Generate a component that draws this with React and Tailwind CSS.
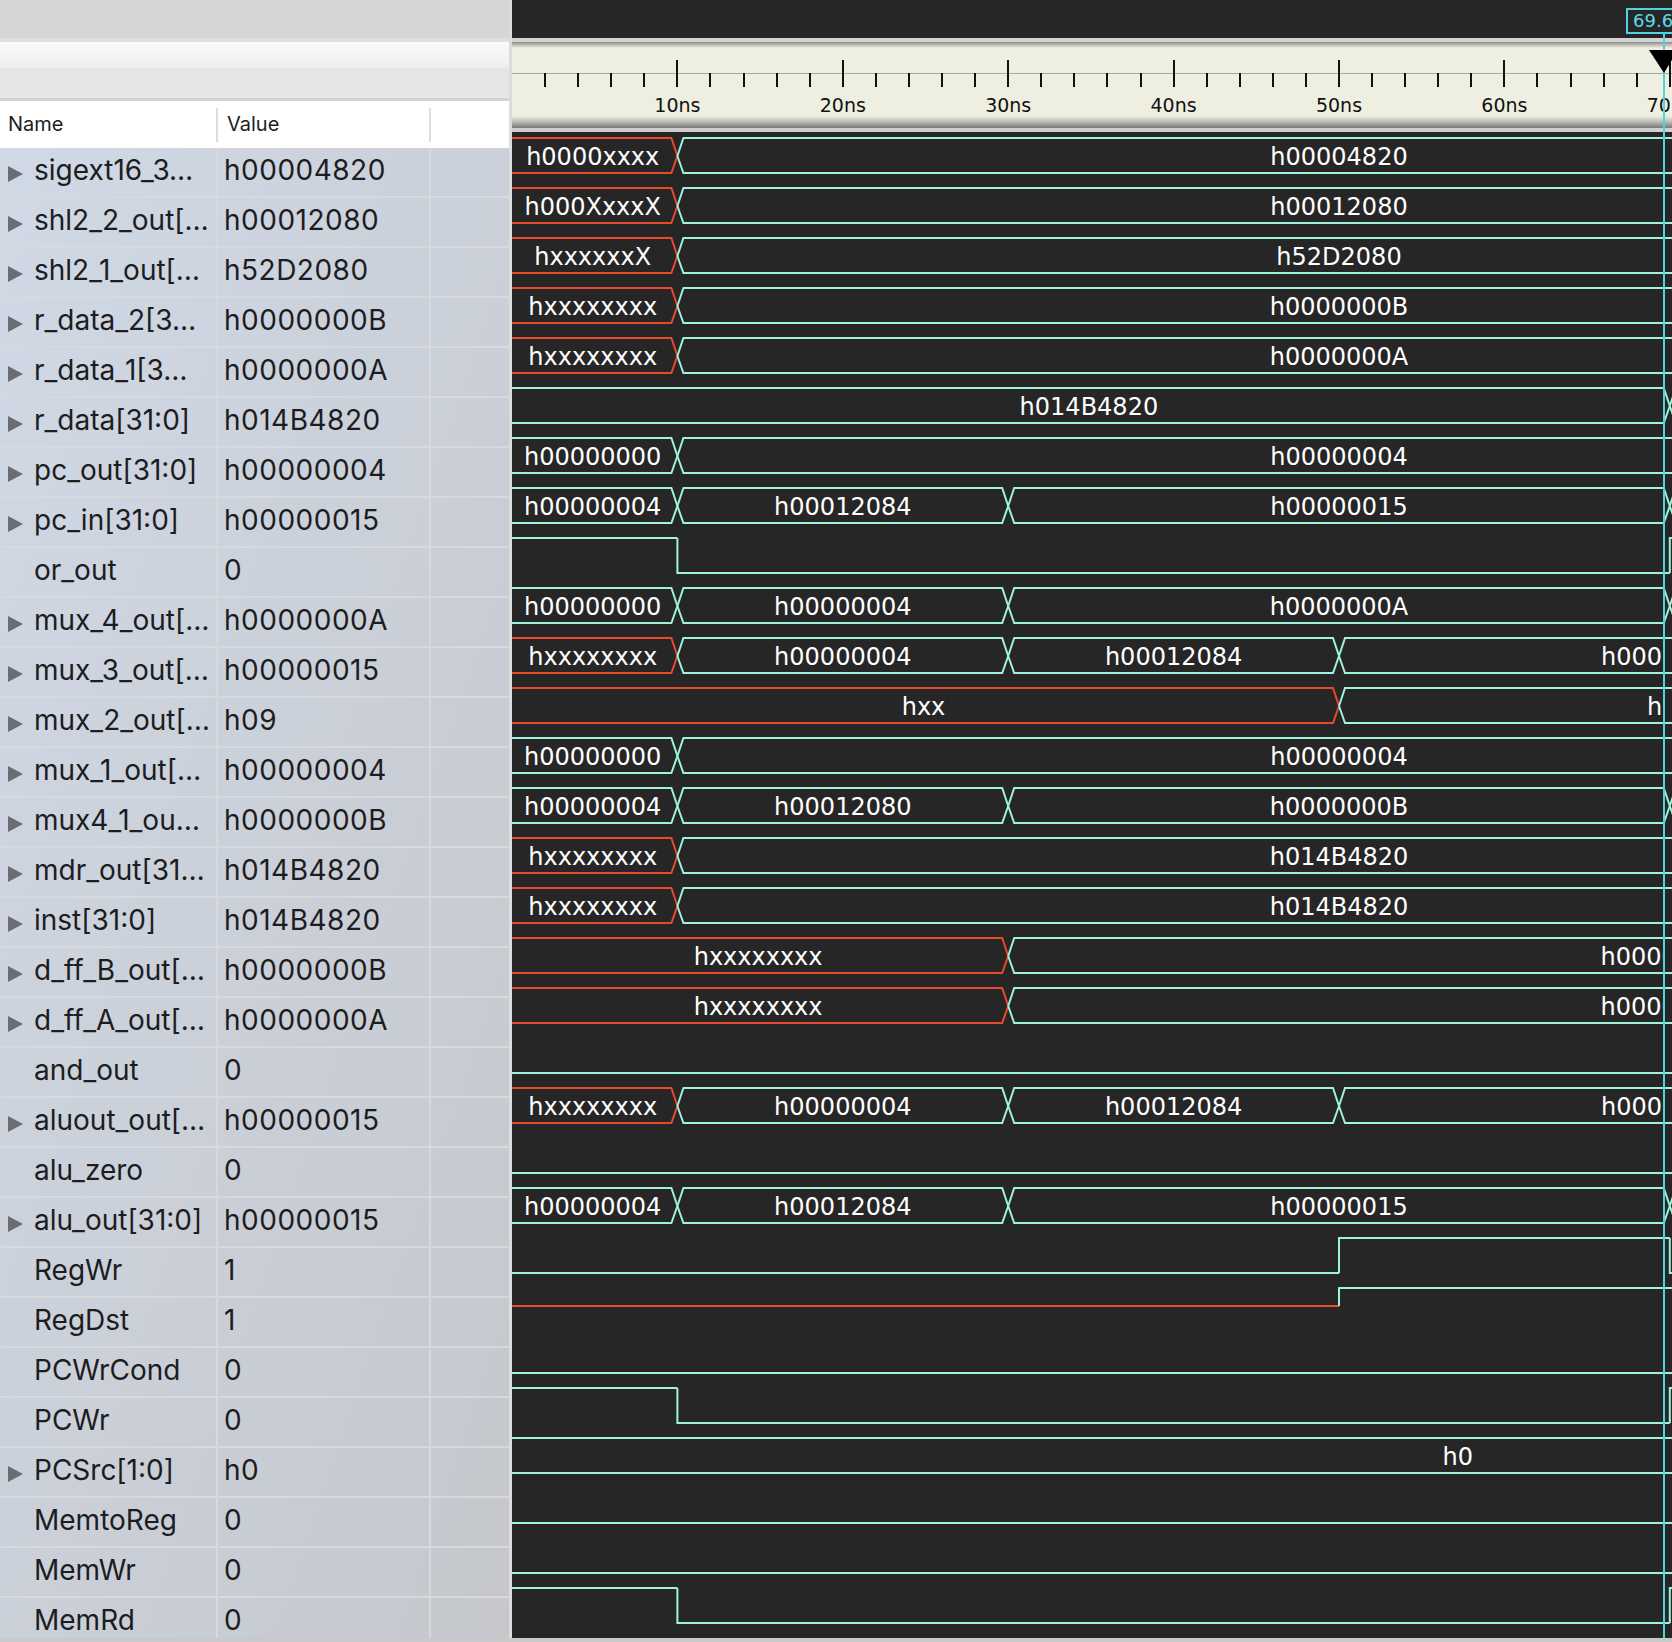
import React from "react";

// px per ns on the time axis
const T = 16.54;
const TEAL = "#9ef3da";
const RED = "#ea4a2c";
const CURSOR_X = 1151;
const TOP = 6;
const BOT = 41;
const MID = 24;
const D = 6;

const signals = [
  { name: "sigext16_3…", value: "h00004820", bus: [[0, 10, "r", "h0000xxxx"], [10, 90, "t", "h00004820"]] },
  { name: "shl2_2_out[…", value: "h00012080", bus: [[0, 10, "r", "h000XxxxX"], [10, 90, "t", "h00012080"]] },
  { name: "shl2_1_out[…", value: "h52D2080", bus: [[0, 10, "r", "hxxxxxxX"], [10, 90, "t", "h52D2080"]] },
  { name: "r_data_2[3…", value: "h0000000B", bus: [[0, 10, "r", "hxxxxxxxx"], [10, 90, "t", "h0000000B"]] },
  { name: "r_data_1[3…", value: "h0000000A", bus: [[0, 10, "r", "hxxxxxxxx"], [10, 90, "t", "h0000000A"]] },
  { name: "r_data[31:0]", value: "h014B4820", bus: [[0, 70, "t", "h014B4820"], [70, 90, "t", ""]] },
  { name: "pc_out[31:0]", value: "h00000004", bus: [[0, 10, "t", "h00000000"], [10, 90, "t", "h00000004"]] },
  { name: "pc_in[31:0]", value: "h00000015", bus: [[0, 10, "t", "h00000004"], [10, 30, "t", "h00012084"], [30, 70, "t", "h00000015"], [70, 90, "t", ""]] },
  { name: "or_out", value: "0", bit: [[0, 10, 1], [10, 70, 0], [70, 90, 1]] },
  { name: "mux_4_out[…", value: "h0000000A", bus: [[0, 10, "t", "h00000000"], [10, 30, "t", "h00000004"], [30, 70, "t", "h0000000A"], [70, 90, "t", ""]] },
  { name: "mux_3_out[…", value: "h00000015", bus: [[0, 10, "r", "hxxxxxxxx"], [10, 30, "t", "h00000004"], [30, 50, "t", "h00012084"], [50, 90, "t", "h00000015"]] },
  { name: "mux_2_out[…", value: "h09", bus: [[0, 50, "r", "hxx"], [50, 90, "t", "h09"]] },
  { name: "mux_1_out[…", value: "h00000004", bus: [[0, 10, "t", "h00000000"], [10, 90, "t", "h00000004"]] },
  { name: "mux4_1_ou…", value: "h0000000B", bus: [[0, 10, "t", "h00000004"], [10, 30, "t", "h00012080"], [30, 70, "t", "h0000000B"], [70, 90, "t", ""]] },
  { name: "mdr_out[31…", value: "h014B4820", bus: [[0, 10, "r", "hxxxxxxxx"], [10, 90, "t", "h014B4820"]] },
  { name: "inst[31:0]", value: "h014B4820", bus: [[0, 10, "r", "hxxxxxxxx"], [10, 90, "t", "h014B4820"]] },
  { name: "d_ff_B_out[…", value: "h0000000B", bus: [[0, 30, "r", "hxxxxxxxx"], [30, 110, "t", "h0000000B"]] },
  { name: "d_ff_A_out[…", value: "h0000000A", bus: [[0, 30, "r", "hxxxxxxxx"], [30, 110, "t", "h0000000A"]] },
  { name: "and_out", value: "0", bit: [[0, 90, 0]] },
  { name: "aluout_out[…", value: "h00000015", bus: [[0, 10, "r", "hxxxxxxxx"], [10, 30, "t", "h00000004"], [30, 50, "t", "h00012084"], [50, 90, "t", "h00000015"]] },
  { name: "alu_zero", value: "0", bit: [[0, 90, 0]] },
  { name: "alu_out[31:0]", value: "h00000015", bus: [[0, 10, "t", "h00000004"], [10, 30, "t", "h00012084"], [30, 70, "t", "h00000015"], [70, 90, "t", ""]] },
  { name: "RegWr", value: "1", bit: [[0, 50, 0], [50, 70, 1], [70, 90, 0]] },
  { name: "RegDst", value: "1", bit: [[0, 50, "x"], [50, 90, 1]] },
  { name: "PCWrCond", value: "0", bit: [[0, 90, 0]] },
  { name: "PCWr", value: "0", bit: [[0, 10, 1], [10, 70, 0], [70, 90, 1]] },
  { name: "PCSrc[1:0]", value: "h0", bus: [[0, 114.6, "t", "h0"]] },
  { name: "MemtoReg", value: "0", bit: [[0, 90, 0]] },
  { name: "MemWr", value: "0", bit: [[0, 90, 0]] },
  { name: "MemRd", value: "0", bit: [[0, 10, 1], [10, 70, 0], [70, 90, 1]] },
];

function BusWave({ segs }) {
  return (
    <svg width="1160" height="50" className="block">
      {segs.map(([a, b, c], i) => {
        const x0 = a * T;
        const x1 = b * T;
        const col = c === "r" ? RED : TEAL;
        const start = (y) => (a === 0 ? `M0 ${y}` : `M${x0} ${MID} L${x0 + D} ${y}`);
        const top = `${start(TOP)} L${x1 - D} ${TOP} L${x1} ${MID}`;
        const bot = `${start(BOT)} L${x1 - D} ${BOT} L${x1} ${MID}`;
        return (
          <g key={i} stroke={col} strokeWidth="2" fill="none">
            <path d={top} />
            <path d={bot} />
          </g>
        );
      })}
      {/* labels are clipped at the cursor line */}
      <svg width={CURSOR_X} height="50">
        {segs.map(([a, b, , label], i) =>
          label ? (
            <text
              key={i}
              x={((a + b) / 2) * T - (a === 0 ? 2 : 0)}
              y="33"
              textAnchor="middle"
              fill="#ffffff"
              fontSize="24"
              fontFamily="'DejaVu Sans', sans-serif"
            >
              {label}
            </text>
          ) : null
        )}
      </svg>
    </svg>
  );
}

function BitWave({ segs }) {
  const lvl = (v) => (v === 1 ? TOP : v === 0 ? BOT : MID);
  return (
    <svg width="1160" height="50" className="block">
      {segs.map(([a, b, v], i) => {
        const y = lvl(v);
        const d =
          i === 0
            ? `M0 ${y} L${b * T} ${y}`
            : `M${a * T} ${lvl(segs[i - 1][2])} L${a * T} ${y} L${b * T} ${y}`;
        return <path key={i} d={d} stroke={v === "x" ? RED : TEAL} strokeWidth="2" fill="none" />;
      })}
    </svg>
  );
}

function Ruler() {
  const ticks = [];
  for (let t = 2; t <= 70; t += 2) ticks.push(t);
  return (
    <div className="h-[94px] bg-[linear-gradient(to_bottom,#d3d3d3_0px,#d3d3d3_4px,#8c8c8c_4px,#efefe1_10px,#efefe1_78px,#b9b9b0_84px,#777777_90px,#d0d0d0_90px,#d0d0d0_94px)]">
      <svg width="1160" height="94" className="block">
        <line x1="0" y1="35.5" x2="1160" y2="35.5" stroke="#a9a9a2" strokeWidth="1" />
        {ticks.map((t) => {
          const x = Math.round(t * T);
          const major = t % 10 === 0;
          return <line key={t} x1={x} y1={major ? 22 : 35} x2={x} y2="49" stroke="#111" strokeWidth="2" />;
        })}
        {[10, 20, 30, 40, 50, 60, 70].map((t) => (
          <text
            key={t}
            x={t * T}
            y="74"
            textAnchor="middle"
            fontSize="19"
            fill="#111"
            fontFamily="'DejaVu Sans', sans-serif"
          >
            {t}ns
          </text>
        ))}
      </svg>
    </div>
  );
}

function ListRow({ s }) {
  return (
    <div className="flex h-[50px] border-b-2 border-[#d7d9dd] text-[28px] leading-[44px] text-[#1d1d1f]">
      <div className="w-[216px] flex items-start overflow-hidden">
        <div className="w-[34px] shrink-0 pl-[8px] pt-[18px]">
          {s.bus && (
            <div className="w-0 h-0 border-y-[8px] border-y-transparent border-l-[15px] border-l-[#6b6d73]" />
          )}
        </div>
        <span className="whitespace-nowrap">{s.name}</span>
      </div>
      <div className="w-[2px] bg-[#d7d9dd]" />
      <div className="w-[211px] pl-[6px] tracking-[0.5px] whitespace-nowrap">{s.value}</div>
      <div className="w-[2px] bg-[#d7d9dd]" />
      <div className="flex-1" />
    </div>
  );
}

export default function App() {
  return (
    <div className="w-[1672px] h-[1642px] overflow-hidden bg-[#c9c9c9] font-['Inter',sans-serif]">
      <div className="flex h-[1638px]">
        {/* signal list */}
        <div className="w-[509px] flex flex-col">
          <div className="h-[42px] bg-[#d6d6d6] border-b-4 border-[#dedede]" />
          <div className="h-[26px] bg-linear-to-b from-[#fbfbfb] to-[#eeeeee]" />
          <div className="h-[33px] bg-[#e6e6e6] border-b-[3px] border-[#d3d3d3]" />
          <div className="h-[47px] bg-white flex items-start text-[20px] leading-[47px] text-[#1d1d1f]">
            <div className="w-[216px] pl-[8px]">Name</div>
            <div className="w-[2px] h-[34px] mt-[7px] bg-[#dedede]" />
            <div className="w-[211px] pl-[9px]">Value</div>
            <div className="w-[2px] h-[34px] mt-[7px] bg-[#dedede]" />
          </div>
          <div className="flex-1 overflow-hidden bg-linear-to-br from-[#d0d9e6] to-[#c5c7cc]">
            {signals.map((s) => (
              <ListRow key={s.name} s={s} />
            ))}
          </div>
        </div>
        <div className="w-[3px] bg-[#dcdcdc]" />

        {/* waveform */}
        <div className="w-[1160px] relative bg-[#262626] flex flex-col overflow-hidden">
          <div className="h-[38px]" />
          <Ruler />
          <div className="flex-1 overflow-hidden">
            {signals.map((s) =>
              s.bus ? <BusWave key={s.name} segs={s.bus} /> : <BitWave key={s.name} segs={s.bit} />
            )}
          </div>

          <div className="absolute left-[1151px] top-[34px] bottom-0 w-[2px] bg-[#52d2e1]" />
          <svg width="1160" height="80" className="absolute left-0 top-0 pointer-events-none">
            <polygon points="1137,50 1166,50 1152,73" fill="#000" />
          </svg>
          <div className="absolute left-[1114px] top-[8px] h-[26px] w-[80px] border-2 border-[#52d2e1] bg-[#262626] pl-[5px] text-[18px] leading-[22px] text-[#5edbe8] whitespace-nowrap font-['DejaVu_Sans',sans-serif]">
            69.600ns
          </div>
        </div>
      </div>
    </div>
  );
}
